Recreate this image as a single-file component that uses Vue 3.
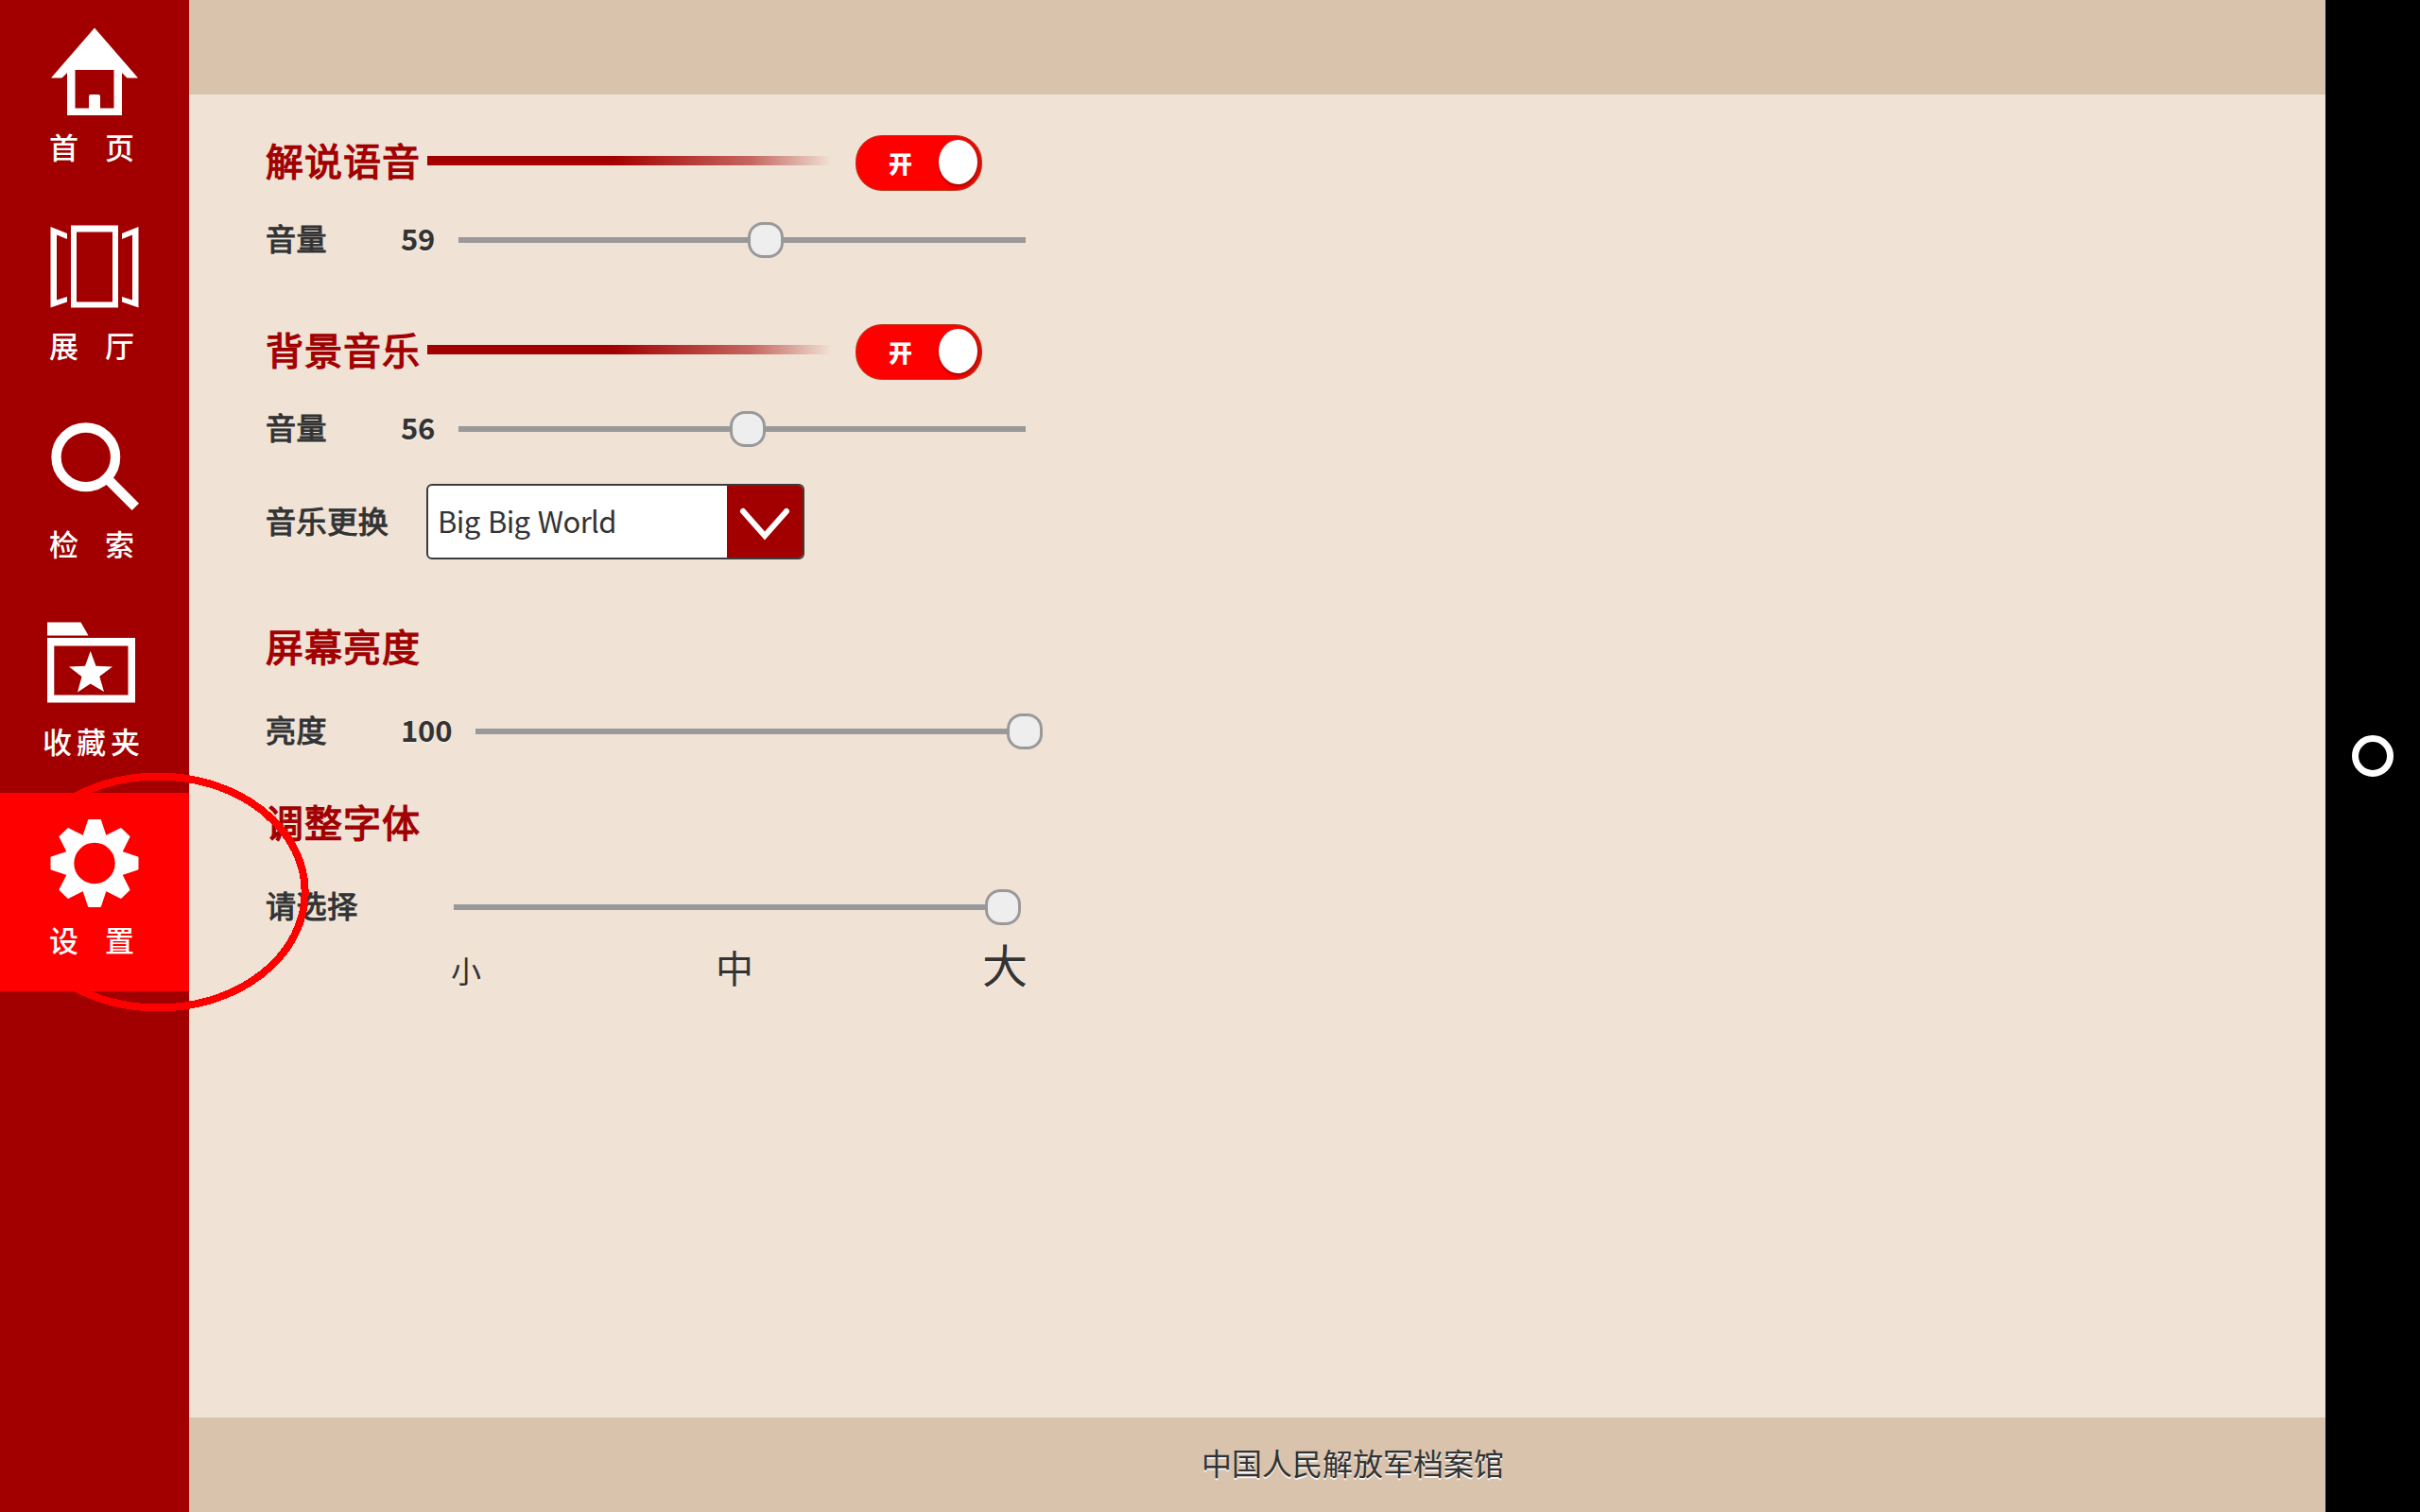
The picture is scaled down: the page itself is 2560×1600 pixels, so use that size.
<script setup>
const nav = [
  { id: 'home', label: '首页', wide: true },
  { id: 'hall', label: '展厅', wide: true },
  { id: 'search', label: '检索', wide: true },
  { id: 'favorites', label: '收藏夹', wide: false },
  { id: 'settings', label: '设置', wide: true, active: true },
]

const teeth = [0, 45, 90, 135, 180, 225, 270, 315]
</script>

<template>
  <div class="screen">
    <nav class="sidebar">
      <a v-for="item in nav" :key="item.id" class="nav-item" :class="{ active: item.active }">
        <svg class="nav-icon" viewBox="0 0 100 100" fill="#fff">
          <g v-if="item.id === 'home'">
            <path fill-rule="evenodd" d="M50 4.500L96 57.500H84.500L79 52V97H21V52L15.500 57.500H4ZM29.500 49V89.500H70.500V49Z" />
            <path d="M44 90V77q0-2 2-2h8q2 0 2 2v13z" />
          </g>
          <g v-else-if="item.id === 'hall'">
            <path fill-rule="evenodd" d="M25 3.500H75V90.500H25ZM31 10.500V84.500H69V10.500Z" />
            <path d="M3.500 5L21 12V18L10 13.500V82.500L21 79V84.500L3.500 90.500Z" />
            <path d="M96.500 5L79 12V18L90 13.500V82.500L79 79V84.500L96.500 90.500Z" />
          </g>
          <g v-else-if="item.id === 'search'" fill="none" stroke="#fff">
            <circle cx="40.800" cy="38.800" r="31.300" stroke-width="10.300" />
            <path d="M62 60L93.300 91.400" stroke-width="10.500" />
          </g>
          <g v-else-if="item.id === 'favorites'">
            <path d="M0 4.500H35.500L43.500 18.500H0Z" />
            <path fill-rule="evenodd" d="M0 21H93V89.500H0ZM7.300 29.500V81.500H85.500V29.500Z" />
            <path d="M45.700 35L51.500 50.800L69 51.500L55.300 61.800L60 78L45.700 69.500L32 78.500L36.500 62L23 51.500L40 50.800Z" />
          </g>
          <g v-else>
            <g transform="translate(50 49.500)" stroke="#fff" stroke-width="2" stroke-linejoin="round">
              <path
                v-for="angle in teeth"
                :key="angle"
                :transform="`rotate(${angle})`"
                d="M-6 -45.500H6L11.500 -29L8 -24.500H-8L-11.500 -29Z"
              />
              <circle r="25.700" fill="none" stroke-width="8" />
            </g>
          </g>
        </svg>
        <span class="nav-label" :class="{ wide: item.wide }">{{ item.label }}</span>
      </a>
    </nav>

    <div class="page">
      <header class="band"></header>
      <main class="content">
        <section class="group voice">
          <div class="title-row">
            <h2>解说语音</h2>
            <i class="rule"></i>
            <div class="switch"><span>开</span><i class="knob"></i></div>
          </div>
          <div class="field">
            <label>音量</label><b class="value">59</b>
            <div class="slider"><i class="thumb" :style="{ left: '325px' }"></i></div>
          </div>
        </section>

        <section class="group music">
          <div class="title-row">
            <h2>背景音乐</h2>
            <i class="rule"></i>
            <div class="switch"><span>开</span><i class="knob"></i></div>
          </div>
          <div class="field">
            <label>音量</label><b class="value">56</b>
            <div class="slider"><i class="thumb" :style="{ left: '306px' }"></i></div>
          </div>
          <div class="field track-field">
            <label class="track-label">音乐更换</label>
            <div class="select">
              <span class="option">Big Big World</span>
              <span class="arrow">
                <svg viewBox="0 0 80 76"><path d="M17 27L40 53L63 27" fill="none" stroke="#fff" stroke-width="6" stroke-linecap="round" /></svg>
              </span>
            </div>
          </div>
        </section>

        <section class="group brightness">
          <div class="title-row"><h2>屏幕亮度</h2></div>
          <div class="field">
            <label>亮度</label><b class="value long">100</b>
            <div class="slider"><i class="thumb" :style="{ left: '581px' }"></i></div>
          </div>
        </section>

        <section class="group font-size">
          <div class="title-row"><h2>调整字体</h2></div>
          <div class="field">
            <label class="choose">请选择</label>
            <div class="slider"><i class="thumb" :style="{ left: '581px' }"></i></div>
          </div>
          <div class="sizes">
            <span class="small">小</span><span class="medium">中</span><span class="large">大</span>
          </div>
        </section>
      </main>
      <footer class="band"><span>中国人民解放军档案馆</span></footer>
    </div>

    <aside class="system-bar"><i class="home-button"></i></aside>

    <svg class="marker" viewBox="0 0 320 254">
      <ellipse cx="160" cy="127" rx="155.700" ry="122.500" />
    </svg>
  </div>
</template>

<style>
body {
  margin: 0;
  overflow: hidden;
}
</style>

<style scoped>
.screen {
  position: relative;
  display: flex;
  width: 2560px;
  height: 1600px;
  overflow: hidden;
  background: #f0e2d5;
  color: #333;
  font: 32px/1.4 "Noto Sans CJK SC", sans-serif;
}

.sidebar {
  flex: none;
  width: 200px;
  background: #a20000;
}

.nav-item {
  display: flex;
  flex-direction: column;
  align-items: center;
  box-sizing: border-box;
  height: 209.750px;
  padding-top: 25px;
}

.nav-item.active {
  background: #f00;
}

.nav-icon {
  width: 100px;
  height: 100px;
  flex: none;
}

.nav-label {
  width: 110px;
  margin-top: 10px;
  line-height: 40px;
  color: #fff;
  font-size: 31px;
  font-weight: 500;
  letter-spacing: 5px;
  white-space: nowrap;
}

.nav-label.wide {
  width: 96px;
  letter-spacing: 28px;
}

.page {
  display: flex;
  flex-direction: column;
  width: 2260px;
}

.band {
  height: 100px;
  flex: none;
  background: #dac3ac;
}

footer.band {
  display: flex;
  align-items: center;
  box-sizing: border-box;
  padding: 0 0 5px 1071px;
  text-shadow: 0 2px 0 #f3f3f3;
}

.content {
  flex: 1;
  padding: 40px 0 0 81px;
  text-shadow: 0 2px 0 #f3ece4;
}

.title-row {
  display: flex;
  align-items: center;
  height: 62px;
}

h2 {
  width: 171px;
  margin: 0;
  padding-bottom: 4px;
  color: #a20000;
  font-size: 40px;
  font-weight: 400;
  line-height: 58px;
  letter-spacing: 1px;
  white-space: nowrap;
  -webkit-text-stroke: 1.300px #a20000;
}

.rule {
  width: 428px;
  height: 10px;
  margin-bottom: 2px;
  background: linear-gradient(90deg, #a20000 46%, rgba(162, 0, 0, 0.550) 80%, rgba(162, 0, 0, 0));
}

.switch {
  display: flex;
  align-items: center;
  justify-content: space-between;
  box-sizing: border-box;
  width: 134px;
  height: 59px;
  margin: 3px 0 0 25px;
  padding: 0 4px 0 34px;
  border: 1px solid #b8391c;
  border-radius: 28px;
  background: linear-gradient(90deg, #f00 75%, #d90f08);
  color: #fff;
  font-size: 25px;
  font-weight: 900;
  text-shadow: none;
}

.knob {
  width: 41px;
  height: 47px;
  margin-bottom: 2px;
  border-radius: 50%;
  background: #fff;
  box-shadow: 0 2px 3px rgba(110, 0, 0, 0.600);
}

.field {
  display: flex;
  align-items: center;
  height: 60px;
  margin-top: 22px;
}

.field label {
  width: 143px;
  flex: none;
  padding-bottom: 5px;
  letter-spacing: 0.600px;
  white-space: nowrap;
  -webkit-text-stroke: 1.100px #333;
}

.value {
  width: 36px;
  padding-bottom: 5px;
  font-size: 31px;
  font-weight: 700;
  letter-spacing: -0.200px;
}

.value.long {
  width: 54px;
}

.slider {
  position: relative;
  width: 600px;
  height: 6px;
  margin-left: 25px;
  background: #999;
}

.thumb {
  position: absolute;
  top: -16px;
  box-sizing: border-box;
  width: 38px;
  height: 38px;
  margin-left: -19px;
  border: 3px solid #999;
  border-radius: 16px;
  background: #eee;
}

.music {
  margin-top: 56px;
}

.field.track-field {
  height: 80px;
  margin-top: 28px;
}

.field .track-label {
  width: 170px;
  padding-bottom: 3px;
}

.select {
  display: flex;
  box-sizing: border-box;
  width: 400px;
  height: 80px;
  overflow: hidden;
  border: 2px solid #3c3c3c;
  border-radius: 6px;
  background: #fff;
  text-shadow: none;
}

.option {
  flex: 1;
  padding-left: 10px;
  line-height: 73px;
  font-size: 31px;
  letter-spacing: -0.600px;
  word-spacing: 2px;
}

.arrow {
  width: 80px;
  background: #a20000;
}

.arrow svg {
  display: block;
  width: 80px;
  height: 76px;
}

.brightness {
  margin-top: 62px;
}

.brightness .field,
.font-size .field {
  margin-top: 28px;
}

.brightness .slider {
  width: 581px;
}

.font-size {
  margin-top: 36px;
}

.field .choose {
  width: 199px;
}

.font-size .slider {
  width: 581px;
  margin-left: 0;
}

.sizes {
  display: flex;
  align-items: baseline;
  width: 610px;
  height: 58px;
  margin-left: 196px;
  line-height: 58px;
}

.medium {
  margin-left: 248px;
  font-size: 40px;
}

.large {
  margin-left: 242px;
  font-size: 48px;
}

.system-bar {
  display: flex;
  align-items: center;
  justify-content: center;
  width: 100px;
  background: #000;
}

.home-button {
  box-sizing: border-box;
  width: 44px;
  height: 44px;
  border: 7px solid #fff;
  border-radius: 50%;
}

.marker {
  position: absolute;
  left: 7px;
  top: 817px;
  width: 320px;
  height: 254px;
  fill: none;
  stroke: #f00;
  stroke-width: 8;
  shape-rendering: crispEdges;
}
</style>
